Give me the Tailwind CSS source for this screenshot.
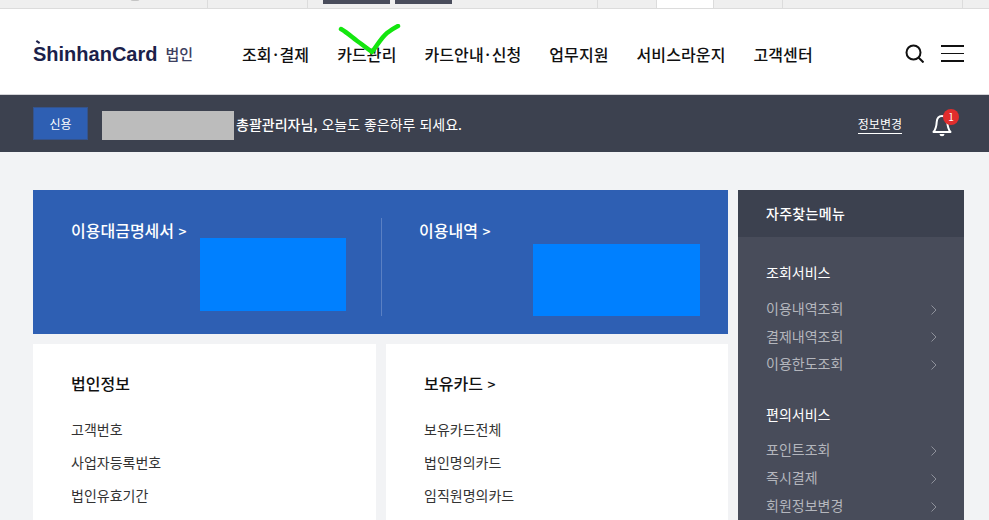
<!DOCTYPE html>
<html lang="ko">
<head>
    <meta charset="UTF-8">
    <title>ShinhanCard</title>
    <script src="https://cdn.jsdelivr.net/npm/@tailwindcss/browser@4"></script>
</head>
<body class="bg-[#f2f3f5] h-[520px] overflow-hidden font-['Noto_Sans_CJK_KR','Noto_Sans',sans-serif]">
    <!-- Browser tabs -->
    <div class="relative h-[9px] bg-[#efefef] border-b border-[#dcdcdc] flex overflow-hidden">
        <div class="w-[208px] shrink-0 h-[8px] border-r border-[#dcdcdc]">
            <span class="absolute left-[130px] -top-[5px] w-[10px] h-[6px] rounded-full bg-[#c4c4c4]"></span>
        </div>
        <div class="w-[100px] shrink-0 h-[8px] border-r border-[#dcdcdc]"></div>
        <div class="w-[290px] shrink-0 h-[8px] border-r border-[#dcdcdc] flex items-start gap-[5px] pl-[15px]">
            <span class="w-[67px] h-[4px] bg-[#4a4d5c]"></span>
            <span class="w-[57px] h-[4px] bg-[#4a4d5c]"></span>
        </div>
        <div class="w-[59px] shrink-0 h-[8px] border-r border-[#dcdcdc]"></div>
        <div class="w-[57px] shrink-0 h-[9px] bg-white border-r border-[#dcdcdc]"></div>
        <div class="w-[69px] shrink-0 h-[8px] border-r border-[#dcdcdc]"></div>
        <div class="w-[180px] shrink-0 h-[8px] border-r border-[#dcdcdc]"></div>
    </div>

    <!-- Header -->
    <header class="relative h-[86px] bg-white border-b border-[#d4d4d8] flex items-center pl-[33px] pr-[25px] pt-[4px]">
        <div class="w-[209px] flex items-center gap-[8px] text-[#1b1f4a]">
            <span class="relative font-['Liberation_Sans',sans-serif] font-bold text-[20px] leading-none">ShinhanCard
                <span class="absolute left-[3px] -top-[3px] w-[4px] h-[2px] rotate-[35deg] bg-[#1b1f4a]"></span>
            </span>
            <span class="text-[15px] font-medium text-[#3d4060] leading-none">법인</span>
        </div>
        <nav class="flex gap-[28px] text-[16px] font-medium text-[#111] leading-none tracking-[0.1px]">
            <a>조회<span class="px-[1.500px]">·</span>결제</a>
            <a>카드관리</a>
            <a>카드안내<span class="px-[1.500px]">·</span>신청</a>
            <a>업무지원</a>
            <a>서비스라운지</a>
            <a>고객센터</a>
        </nav>
        <div class="ml-auto flex items-center gap-[17px]">
            <svg width="19" height="19" viewBox="0 0 19 19" fill="none" stroke="#111" stroke-width="2"><circle cx="8.500" cy="8.500" r="7"/><path d="M13.500 13.500 18.500 18.500"/></svg>
            <div class="w-[23px] flex flex-col gap-[6px]">
                <span class="h-[2px] bg-[#111]"></span>
                <span class="h-[1.500px] bg-[#111]"></span>
                <span class="h-[2px] bg-[#111]"></span>
            </div>
        </div>
        <svg class="absolute left-[338px] top-[15px]" width="64" height="34" viewBox="0 0 64 34" fill="none" stroke="#14e60f" stroke-width="4.500" stroke-linecap="round" stroke-linejoin="round"><path d="M3 5C10 9 16 15 22 19L34 28C40 20 44 13 49 9 53 6 56 4 60 2"/></svg>
    </header>

    <!-- Info bar -->
    <div class="h-[57px] bg-[#3c414f] flex items-center pl-[33px] pr-[37px]">
        <span class="w-[55px] h-[33px] bg-[#2e5fb3] border border-[#34538c] text-white text-[12px] flex items-center justify-center">신용</span>
        <span class="w-[132px] h-[29px] bg-[#bcbcbc] ml-[14px] mt-[4px]"></span>
        <p class="ml-[2px] text-[14px] text-white mt-[2px]"><span class="font-medium">총괄관리자님,</span> 오늘도 좋은하루 되세요.</p>
        <a class="ml-auto text-[12px] text-white border-b border-white pb-[3px] leading-none mt-[4px]">정보변경</a>
        <div class="relative ml-[30px] mt-[1px]">
            <svg class="block" width="20" height="26" viewBox="0 0 20 26" fill="none" stroke="#fff" stroke-width="2" stroke-linejoin="round"><path d="M1.500 21c2.500-3 3-6 3.200-10 .3-3.500 2.300-6 5.300-6s5 2.500 5.300 6c.2 4 .7 7 3.200 10z"/><path d="M7.500 23a2.500 2.200 0 0 0 5 0z" fill="#fff" stroke="none"/></svg>
            <span class="absolute -top-[2px] left-[11px] w-[16px] h-[16px] rounded-full bg-[#e12d2d] text-white text-[10px] leading-[16px] text-center">1</span>
        </div>
    </div>

    <!-- Content -->
    <main class="flex gap-[10px] pl-[33px] pt-[38px]">
        <div class="w-[695px] flex flex-col gap-[10px]">
            <section class="h-[144px] bg-[#2e5fb3] flex py-[28px]">
                <div class="relative w-[349px] border-r border-[#5a80c4] pl-[38px] h-[98px]">
                    <h2 class="text-white text-[16px] font-medium leading-none mt-[4px]">이용대금명세서 <span class="text-[14px]">&gt;</span></h2>
                    <div class="absolute left-[167px] top-[20px] w-[146px] h-[73px] bg-[#0080ff]"></div>
                </div>
                <div class="relative flex-1 pl-[37px]">
                    <h2 class="text-white text-[16px] font-medium leading-none mt-[4px]">이용내역 <span class="text-[14px]">&gt;</span></h2>
                    <div class="absolute left-[151px] top-[26px] w-[167px] h-[72px] bg-[#0080ff]"></div>
                </div>
            </section>
            <div class="flex gap-[10px]">
                <section class="w-[343px] h-[200px] bg-white pl-[38px] pt-[31px]">
                    <h3 class="text-[16px] font-medium text-[#111] leading-none">법인정보</h3>
                    <ul class="mt-[31px] flex flex-col gap-[18px] text-[14px] text-[#333] leading-[15px]">
                        <li>고객번호</li>
                        <li>사업자등록번호</li>
                        <li>법인유효기간</li>
                    </ul>
                </section>
                <section class="flex-1 h-[200px] bg-white pl-[38px] pt-[31px]">
                    <h3 class="text-[16px] font-medium text-[#111] leading-none">보유카드 <span class="text-[14px]">&gt;</span></h3>
                    <ul class="mt-[31px] flex flex-col gap-[18px] text-[14px] text-[#333] leading-[15px]">
                        <li>보유카드전체</li>
                        <li>법인명의카드</li>
                        <li>임직원명의카드</li>
                    </ul>
                </section>
            </div>
        </div>

        <!-- Sidebar -->
        <aside class="w-[226px] h-[340px] bg-[#484c5a]">
            <h2 class="h-[47px] bg-[#3c414f] pl-[28px] flex items-center text-white text-[14px] font-medium tracking-[0.3px]">자주찾는메뉴</h2>
            <div class="pl-[28px] pr-[27px] pt-[27px]">
                <h3 class="text-[14px] text-white leading-[16px]">조회서비스</h3>
                <ul class="mt-[20px] flex flex-col gap-[11.500px] text-[14px] text-[#b4b6bd] leading-[16px]">
                    <li class="flex justify-between items-center">이용내역조회<svg class="mt-[3px]" width="6" height="10" viewBox="0 0 6 10" fill="none" stroke="#8e919b"><path d="M.5.5 5 5 .5 9.500"/></svg></li>
                    <li class="flex justify-between items-center">결제내역조회<svg class="mt-[3px]" width="6" height="10" viewBox="0 0 6 10" fill="none" stroke="#8e919b"><path d="M.5.5 5 5 .5 9.500"/></svg></li>
                    <li class="flex justify-between items-center">이용한도조회<svg class="mt-[3px]" width="6" height="10" viewBox="0 0 6 10" fill="none" stroke="#8e919b"><path d="M.5.5 5 5 .5 9.500"/></svg></li>
                </ul>
                <h3 class="mt-[35px] text-[14px] text-white leading-[16px]">편의서비스</h3>
                <ul class="mt-[19px] flex flex-col gap-[12px] text-[14px] text-[#b4b6bd] leading-[16px]">
                    <li class="flex justify-between items-center">포인트조회<svg class="mt-[3px]" width="6" height="10" viewBox="0 0 6 10" fill="none" stroke="#8e919b"><path d="M.5.5 5 5 .5 9.500"/></svg></li>
                    <li class="flex justify-between items-center">즉시결제<svg class="mt-[3px]" width="6" height="10" viewBox="0 0 6 10" fill="none" stroke="#8e919b"><path d="M.5.5 5 5 .5 9.500"/></svg></li>
                    <li class="flex justify-between items-center">회원정보변경<svg class="mt-[3px]" width="6" height="10" viewBox="0 0 6 10" fill="none" stroke="#8e919b"><path d="M.5.5 5 5 .5 9.500"/></svg></li>
                </ul>
            </div>
        </aside>
    </main>
</body>
</html>
